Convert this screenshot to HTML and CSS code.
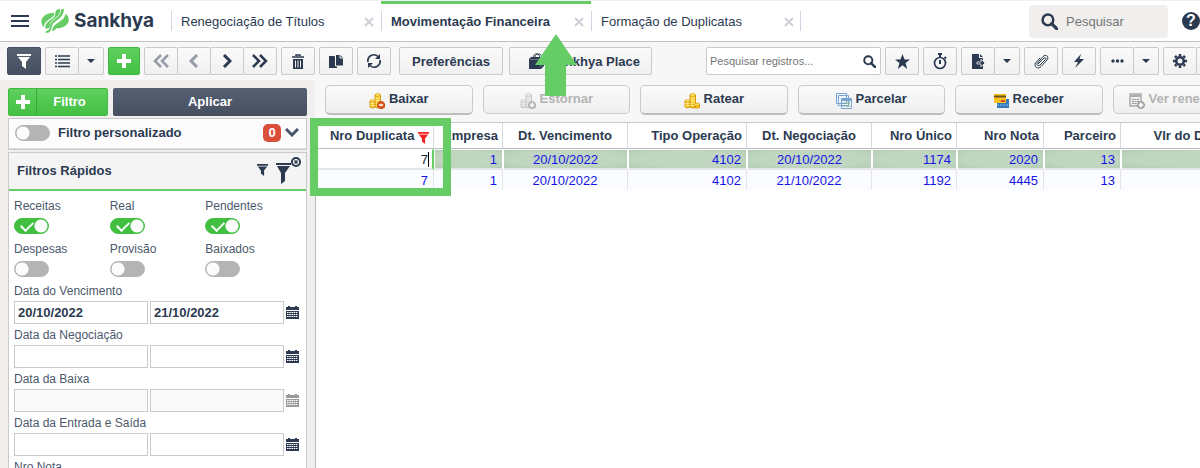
FILE: index.html
```html
<!DOCTYPE html>
<html lang="pt-BR">

<head>
    <meta charset="UTF-8">
    <meta name="viewport" content="width=device-width, initial-scale=1.0">
    <title>Movimentação Financeira</title>
    <link rel="stylesheet" href="styles.css">
</head>

<body>
    <!-- Shared icons -->
    <svg class="sprite" aria-hidden="true">
        <symbol id="i-close" viewBox="0 0 10 10"><path d="M1 1l8 8M9 1L1 9" stroke="currentColor" stroke-width="2" /></symbol>
        <symbol id="i-caret" viewBox="0 0 8 4"><path d="M0 0h8L4 4z" fill="currentColor" /></symbol>
        <symbol id="i-plus" viewBox="0 0 14 14"><path d="M5 0h4v5h5v4H9v5H5V9H0V5h5z" fill="currentColor" /></symbol>
        <symbol id="i-funnel" viewBox="0 0 14 15"><path d="M0 0h14v2H0zM1 3h12L9 8v7l-4-3V8z" fill="currentColor" /></symbol>
        <symbol id="i-search" viewBox="0 0 16 16"><circle cx="6.5" cy="6.5" r="5" fill="none" stroke="currentColor" stroke-width="2.4" /><path d="M10 10l5 5" stroke="currentColor" stroke-width="3" stroke-linecap="round" /></symbol>
        <symbol id="i-calendar" viewBox="0 0 13 13"><path d="M2 0h2v1h5V0h2v1h2v3H0V1h2zM0 5h13v8H0z" fill="currentColor" /><path d="M1 6.5h11M1 8.5h11M1 10.5h11" stroke="#fff" stroke-width="1" stroke-dasharray="1.6 .6" /></symbol>
        <symbol id="i-coins" viewBox="0 0 16 16"><path d="M1 8v6q2.500 2 5 0V8zM6 2v12q3 2 5.500 0V2zM10 11v3.500q2.500 1.500 5.500 0V11z" fill="#fbc92e" stroke="#d9960f" /><path d="M1.500 10.500h4M1.500 12.500h4M6.500 5h4.500M6.500 7.500h4.500M6.500 10h4.500M6.500 12.500h4" stroke="#fff08c" /><ellipse cx="3.500" cy="8" rx="2.500" ry="1.200" fill="#ffe566" stroke="#d9960f" stroke-width=".7" /><ellipse cx="8.700" cy="2" rx="2.700" ry="1.400" fill="#ffe566" stroke="#d9960f" stroke-width=".7" /><ellipse cx="12.700" cy="11.300" rx="2.700" ry="1.200" fill="#ffe566" stroke="#d9960f" stroke-width=".7" /></symbol>
    </svg>

    <header class="topbar">
        <button class="menu-button" aria-label="Menu"><svg width="18" height="12" viewBox="0 0 18 12"><path d="M0 1h18M0 6h18M0 11h18" stroke="currentColor" stroke-width="2" /></svg></button>
        <a class="logo" href="#">
            <svg width="28" height="24" viewBox="0 0 84 72" fill="#66cc66">
                <path d="M9 55C-8 38 2 12 40 11c1 10-6 14-14 19C14 38 9 44 9 55z" />
                <path d="M13 59c-1-13 5-19 16-26 11-7 14-11 14-20C43 4 48 0 57 0c1 14-5 20-15 28-11 8-16 14-16 27-3 3-8 4-13 4z" />
                <path d="M14 72c12 0 16-4 17-14 1-12 8-18 18-25C60 25 68 17 69 0c-6 0-9 1-9 4-1 12-8 19-18 26-10 8-15 14-16 27 0 6-6 9-12 9z" />
                <path d="M74 14c18 14 11 43-28 44-3 5-7 8-12 8-1-12 7-19 17-25 13-8 20-14 23-27z" />
            </svg>
            <span>Sankhya</span>
        </a>
        <nav class="tabs">
            <div class="tab"><a href="#">Renegociação de Títulos</a><button aria-label="Fechar"><svg width="10" height="10"><use href="#i-close" /></svg></button></div>
            <div class="tab tab-active"><a href="#">Movimentação Financeira</a><button aria-label="Fechar"><svg width="10" height="10"><use href="#i-close" /></svg></button>
                <svg class="arrow" width="42" height="62" viewBox="0 0 42 62"><path d="M21 0l21 31H31v31H10V31H0z" fill="#66cc66" /></svg>
            </div>
            <div class="tab"><a href="#">Formação de Duplicatas</a><button aria-label="Fechar"><svg width="10" height="10"><use href="#i-close" /></svg></button></div>
        </nav>
        <label class="global-search">
            <svg width="17" height="17"><use href="#i-search" /></svg>
            <input type="text" placeholder="Pesquisar" aria-label="Pesquisar">
        </label>
        <button class="help" aria-label="Ajuda">?</button>
    </header>

    <div class="toolbar">
        <button class="btn btn-dark" aria-label="Filtro"><svg width="14" height="15"><use href="#i-funnel" /></svg></button>
        <div class="group">
            <button class="btn" aria-label="Lista"><svg width="15" height="13" viewBox="0 0 15 13"><path d="M0 1h2M0 4.500h2M0 8h2M0 11.500h2M3 1h12M3 4.500h12M3 8h12M3 11.500h12" stroke="currentColor" stroke-width="1.500" /></svg></button>
            <button class="btn btn-caret" aria-label="Opções de lista"><svg width="8" height="4"><use href="#i-caret" /></svg></button>
        </div>
        <button class="btn btn-green" aria-label="Adicionar"><svg width="14" height="14"><use href="#i-plus" /></svg></button>
        <div class="group">
            <button class="btn" disabled aria-label="Primeiro"><svg width="16" height="14" viewBox="0 0 16 14"><path d="M8 1L2 7l6 6M15 1L9 7l6 6" fill="none" stroke="currentColor" stroke-width="2.500" /></svg></button>
            <button class="btn" disabled aria-label="Anterior"><svg width="10" height="14" viewBox="0 0 10 14"><path d="M8 1L2 7l6 6" fill="none" stroke="currentColor" stroke-width="3" /></svg></button>
            <button class="btn" aria-label="Próximo"><svg width="10" height="14" viewBox="0 0 10 14"><path d="M2 1l6 6-6 6" fill="none" stroke="currentColor" stroke-width="3" /></svg></button>
            <button class="btn" aria-label="Último"><svg width="16" height="14" viewBox="0 0 16 14"><path d="M1 1l6 6-6 6M8 1l6 6-6 6" fill="none" stroke="currentColor" stroke-width="2.500" /></svg></button>
        </div>
        <button class="btn" aria-label="Excluir"><svg width="12" height="15" viewBox="0 0 12 15"><path d="M4 2V1h4v1M0 3h12" fill="none" stroke="currentColor" stroke-width="1.500" /><path d="M1 5h10v10H1z" fill="currentColor" /><path d="M3.500 6.500v7M6 6.500v7M8.500 6.500v7" stroke="#f4f4f4" /></svg></button>
        <button class="btn" aria-label="Duplicar"><svg width="15" height="14" viewBox="0 0 15 14"><path d="M0 2h5l3 2v10H0z" fill="currentColor" /><path d="M6.500.500h5L14.500 4v8h-8z" fill="currentColor" stroke="#f4f4f4" /><path d="M11 .500V4h3.500" fill="none" stroke="#f4f4f4" /></svg></button>
        <button class="btn" aria-label="Atualizar"><svg width="16" height="16" viewBox="0 0 16 16"><path d="M2 9a6 6 0 0 1 10-5.500M14 7a6 6 0 0 1-10 5.500" fill="none" stroke="currentColor" stroke-width="1.700" /><path d="M14 1v5H9zM2 15v-5h5z" fill="currentColor" /></svg></button>
        <button class="btn btn-text btn-prefs">Preferências</button>
        <button class="btn btn-text btn-place"><svg width="15" height="16" viewBox="0 0 15 16"><path d="M0 6l2-2h13v9l-3 3H0z" fill="currentColor" /><path d="M4 6c0-7 7-7 7 0M6 4c0-4 7-4 7 0" fill="none" stroke="currentColor" /><path d="M1 6.500h11v8" fill="none" stroke="#8791a0" stroke-width=".7" /></svg>Sankhya Place</button>
        <label class="record-search">
            <input type="text" placeholder="Pesquisar registros..." aria-label="Pesquisar registros">
            <svg width="13" height="13"><use href="#i-search" /></svg>
        </label>
        <button class="btn" aria-label="Favoritos"><svg width="15" height="15" viewBox="0 0 16 16"><path d="M8 0l2.200 5.800H16l-4.700 3.700L13 16l-5-4-5 4 1.700-6.500L0 5.800h5.800z" fill="currentColor" /></svg></button>
        <button class="btn" aria-label="Cronômetro"><svg width="14" height="17" viewBox="0 0 14 17"><circle cx="7" cy="10" r="5.500" fill="none" stroke="currentColor" stroke-width="1.700" /><path d="M5 1h4M7 1v3M7 7v4M11.500 4l1.500 1.500" stroke="currentColor" stroke-width="2" /></svg></button>
        <div class="group">
            <button class="btn" aria-label="Exportar"><svg width="14" height="15" viewBox="0 0 14 15"><path d="M1 0h7v4h4v11H1z" fill="currentColor" /><path d="M9 0l3 3H9z" fill="currentColor" /><path d="M6 8h4V5l4 4-4 4v-3H6z" fill="currentColor" stroke="#f4f4f4" stroke-width=".8" /></svg></button>
            <button class="btn btn-caret" aria-label="Opções de exportação"><svg width="8" height="4"><use href="#i-caret" /></svg></button>
        </div>
        <button class="btn" aria-label="Anexos"><svg width="15" height="15" viewBox="0 0 15 15"><path d="M4 10l6-6c1.500-1 2.500.500 1.500 1.500L6 11c-2 1.500-4 0-2.500-2L9 2.500c3-3 6.500.500 4 3.500l-6 6.500c-3 3-7.500.500-5.500-3.500L6 4" fill="none" stroke="currentColor" /></svg></button>
        <button class="btn" aria-label="Ações"><svg width="10" height="14" viewBox="0 0 10 14"><path d="M7 0L0 8h4l-3 6 9-9H5.500z" fill="currentColor" /></svg></button>
        <div class="group">
            <button class="btn" aria-label="Mais"><svg width="13" height="4" viewBox="0 0 13 4"><circle cx="2" cy="2" r="1.700" fill="currentColor" /><circle cx="6.500" cy="2" r="1.700" fill="currentColor" /><circle cx="11" cy="2" r="1.700" fill="currentColor" /></svg></button>
            <button class="btn btn-caret" aria-label="Mais opções"><svg width="8" height="4"><use href="#i-caret" /></svg></button>
        </div>
        <div class="group">
            <button class="btn" aria-label="Configurações"><svg width="14" height="14" viewBox="0 0 14 14"><circle cx="7" cy="7" r="3.800" fill="none" stroke="currentColor" stroke-width="2.600" /><path d="M7 0v2M7 12v2M0 7h2M12 7h2M2 2l1.500 1.500M10.500 10.500L12 12M12 2l-1.500 1.500M3.500 10.500L2 12" stroke="currentColor" stroke-width="2.600" /></svg></button>
            <button class="btn btn-caret" aria-label="Opções de configuração"></button>
        </div>
    </div>

    <div class="workspace">
        <aside class="sidebar">
            <div class="filter-buttons">
                <button class="filter-add"><span class="filter-plus"><svg width="14" height="14"><use href="#i-plus" /></svg></span><span class="filter-label">Filtro</span></button>
                <button class="filter-apply">Aplicar</button>
            </div>
            <div class="custom-filter">
                <label><input class="toggle" type="checkbox">Filtro personalizado</label>
                <span class="count">0</span>
                <svg width="14" height="9" viewBox="0 0 14 9"><path d="M1 1l6 6 6-6" fill="none" stroke="#49556a" stroke-width="3" /></svg>
            </div>
            <section class="quick-filters">
                <div class="quick-head">
                    <h2>Filtros Rápidos</h2>
                    <svg width="11" height="12"><use href="#i-funnel" /></svg>
                    <svg width="27" height="27" viewBox="0 0 27 27"><path d="M1 6h15v2H1zM2 9h13l-5 7v8l-4 3V16z" fill="currentColor" /><circle cx="21" cy="5" r="4" fill="#fff" stroke="currentColor" stroke-width="2" /><path d="M19.500 3.500l3 3M22.500 3.500l-3 3" stroke="currentColor" stroke-width="1.500" /></svg>
                </div>
                <div class="quick-body">
                    <div class="toggles">
                        <label>Receitas<input class="toggle" type="checkbox" checked></label>
                        <label>Real<input class="toggle" type="checkbox" checked></label>
                        <label>Pendentes<input class="toggle" type="checkbox" checked></label>
                        <label>Despesas<input class="toggle" type="checkbox"></label>
                        <label>Provisão<input class="toggle" type="checkbox"></label>
                        <label>Baixados<input class="toggle" type="checkbox"></label>
                    </div>
                    <div class="period">
                        <label for="vencimento">Data do Vencimento</label>
                        <input id="vencimento" type="text" value="20/10/2022">
                        <input type="text" value="21/10/2022" aria-label="Data do Vencimento final">
                        <button aria-label="Calendário"><svg width="13" height="13"><use href="#i-calendar" /></svg></button>
                    </div>
                    <div class="period">
                        <label for="negociacao">Data da Negociação</label>
                        <input id="negociacao" type="text">
                        <input type="text" aria-label="Data da Negociação final">
                        <button aria-label="Calendário"><svg width="13" height="13"><use href="#i-calendar" /></svg></button>
                    </div>
                    <div class="period">
                        <label for="baixa">Data da Baixa</label>
                        <input id="baixa" type="text" disabled>
                        <input type="text" aria-label="Data da Baixa final" disabled>
                        <button aria-label="Calendário" disabled><svg width="13" height="13"><use href="#i-calendar" /></svg></button>
                    </div>
                    <div class="period">
                        <label for="entrada">Data da Entrada e Saída</label>
                        <input id="entrada" type="text">
                        <input type="text" aria-label="Data da Entrada e Saída final">
                        <button aria-label="Calendário"><svg width="13" height="13"><use href="#i-calendar" /></svg></button>
                    </div>
                    <div class="period">
                        <label for="nota">Nro Nota</label>
                        <input id="nota" type="text">
                    </div>
                </div>
            </section>
        </aside>

        <main class="content">
            <div class="actions">
                <button class="action"><svg width="16" height="16"><use href="#i-coins" /><circle cx="12" cy="12" r="3.500" fill="#e8622a" stroke="#b8400f" /><path d="M10 12h4" stroke="#fff" stroke-width="1.500" /></svg>Baixar</button>
                <button class="action" disabled><svg class="gray" width="16" height="16"><use href="#i-coins" /><circle cx="12" cy="12" r="3.500" fill="#999" stroke="#666" /><path d="M10 12h4M12 10v4" stroke="#fff" stroke-width="1.500" /></svg>Estornar</button>
                <button class="action"><svg width="16" height="16"><use href="#i-coins" /></svg>Ratear</button>
                <button class="action"><svg width="16" height="16" viewBox="0 0 16 16" fill="#eef5fc" stroke="#7ba3cf"><path d="M.500.500h10v10H.500zM2.500 2.500h10v10h-10zM5.500 5.500h10v10h-10z" /><path d="M6 7h9" stroke-width="2" /><path d="M7 10h2M10 10h4M7 13h2M10 13h4" stroke="#6fa97b" /></svg>Parcelar</button>
                <button class="action"><svg width="15" height="14" viewBox="0 0 15 14"><path d="M3 5h12v9H3z" fill="#3579c0" /><path d="M3 11h12" stroke="#8ab8e6" stroke-dasharray="2 1" /><path d="M0 0h12v9H0z" fill="#fbc21c" /><path d="M0 2.500h12" stroke="#6b5320" stroke-width="2" /><path d="M7 6h4v2H7z" fill="#d9482b" /></svg>Receber</button>
                <button class="action action-long" disabled><svg width="16" height="16" viewBox="0 0 16 16"><path d="M1 1h11v12H1z" fill="#eee" stroke="#aaa" stroke-width="1.500" /><path d="M2 3h9" stroke="#aaa" stroke-width="2" /><path d="M3 6.500h7M3 8.500h7M3 10.500h7" stroke="#999" stroke-dasharray="2 .5" /><circle cx="12" cy="12" r="3.500" fill="#bbb" stroke="#999" /><path d="M10 12h4M12 10v4" stroke="#fff" stroke-width="1.500" /></svg>Ver renegociação</button>
            </div>
            <div class="grid-wrap">
                <table class="grid">
                    <thead>
                        <tr>
                            <th class="col-duplicata">Nro Duplicata <svg class="filtered" width="11" height="12"><use href="#i-funnel" /></svg></th>
                            <th class="col-empresa">Empresa</th>
                            <th class="col-data center">Dt. Vencimento</th>
                            <th class="col-tipo">Tipo Operação</th>
                            <th class="col-data center">Dt. Negociação</th>
                            <th class="col-unico">Nro Único</th>
                            <th class="col-nota">Nro Nota</th>
                            <th class="col-parceiro">Parceiro</th>
                            <th class="col-valor">Vlr do Desdobramento</th>
                        </tr>
                    </thead>
                    <tbody>
                        <tr class="selected">
                            <td class="editing"><input type="text" value="7" aria-label="Nro Duplicata"></td>
                            <td>1</td>
                            <td class="center">20/10/2022</td>
                            <td>4102</td>
                            <td class="center">20/10/2022</td>
                            <td>1174</td>
                            <td>2020</td>
                            <td>13</td>
                            <td></td>
                        </tr>
                        <tr>
                            <td>7</td>
                            <td>1</td>
                            <td class="center">20/10/2022</td>
                            <td>4102</td>
                            <td class="center">21/10/2022</td>
                            <td>1192</td>
                            <td>4445</td>
                            <td>13</td>
                            <td></td>
                        </tr>
                    </tbody>
                </table>
                <div class="highlight"></div>
            </div>
        </main>
    </div>
</body>

</html>
```

FILE: styles.css
```css
* {
    box-sizing: border-box;
}

body {
    margin: 0;
    height: 100vh;
    display: flex;
    flex-direction: column;
    overflow: hidden;
    background-color: #f7f7f7;
    color: #2b3a50;
    font-family: "Liberation Sans", Arial, sans-serif;
    font-size: 13px;
}

button,
input {
    font: inherit;
    color: inherit;
}

button {
    padding: 0;
    border: none;
    background: none;
    cursor: pointer;
}

a {
    color: inherit;
    text-decoration: none;
}

svg {
    display: block;
    flex: none;
}

.sprite {
    position: absolute;
    width: 0;
    height: 0;
}

/* Top bar */
.topbar {
    display: flex;
    align-items: center;
    flex: none;
    height: 42px;
    padding-left: 11px;
    background-color: #fff;
    border-top: 1px solid #f0f0f0;
    border-bottom: 1px solid #c2c2c2;
}

.logo {
    display: flex;
    align-items: center;
    gap: 5px;
    width: 130px;
    margin-left: 12px;
    font-family: Inter, sans-serif;
    font-size: 19px;
    font-weight: bold;
    line-height: 20px;
}

.tabs {
    display: flex;
    align-self: stretch;
    flex: 1;
}

.tab {
    position: relative;
    display: flex;
    align-items: center;
    justify-content: space-between;
    width: 210px;
    padding: 0 7px 2px 10px;
    border-top: 3px solid transparent;
}

.tab::before,
.tab:last-child::after {
    content: "";
    position: absolute;
    left: 0;
    top: 7px;
    height: 20px;
    border-left: 1px solid #cdd6e2;
}

.tab:last-child::after {
    left: auto;
    right: 0;
}

.tab button {
    color: #cdd0d6;
}

.tab-active {
    border-top-color: #66cc66;
    font-weight: bold;
}

.arrow {
    position: absolute;
    z-index: 2;
    left: 154px;
    top: 30px;
}

.global-search {
    display: flex;
    align-items: center;
    flex: none;
    gap: 8px;
    width: 139px;
    height: 33px;
    padding: 0 12px;
    border-radius: 4px;
    background-color: #f0efed;
}

.global-search input,
.record-search input {
    flex: 1;
    min-width: 0;
    padding: 0;
    border: none;
    outline: none;
    background: none;
}

::placeholder {
    color: #757575;
    opacity: 1;
}

.help {
    flex: none;
    width: 18px;
    height: 18px;
    margin-left: 14px;
    border-radius: 50%;
    background-color: #2b3a50;
    color: #fff;
    font-size: 16px;
    font-weight: bold;
    line-height: 18px;
}

/* Toolbar */
.toolbar {
    display: flex;
    flex: none;
    gap: 4px;
    padding: 5px 0 5px 7px;
}

.btn {
    display: flex;
    align-items: center;
    justify-content: center;
    flex: none;
    width: 34px;
    height: 28px;
    border: 1px solid #cacaca;
    border-radius: 2px;
    background-image: linear-gradient(#fafafa, #f0f0f0);
}

.btn:disabled {
    color: #959ca7;
}

.btn-dark {
    border-color: #434e60;
    background-image: linear-gradient(#556072, #454f60);
    color: #fff;
}

.btn-green {
    width: 32px;
    border-color: #3fbb3f;
    background-image: linear-gradient(#5fd05f, #43c043);
    color: #fff;
}

.group {
    display: flex;
    flex: none;
}

.group .btn + .btn {
    margin-left: -1px;
}

.btn-caret {
    width: 26px;
}

.btn-text {
    gap: 5px;
    font-weight: bold;
}

.btn-prefs {
    width: 104px;
    margin-left: 4px;
}

.btn-place {
    width: 143px;
    margin-left: 2px;
    padding-left: 8px;
}

.record-search {
    display: flex;
    align-items: center;
    flex: none;
    width: 175px;
    height: 28px;
    margin-left: 50px;
    padding: 0 4px 0 3px;
    border: 1px solid #cacaca;
    border-radius: 2px;
    background-color: #fff;
    font-size: 11px;
}

/* Sidebar */
.workspace {
    display: flex;
    flex: 1;
    min-height: 0;
}

.sidebar {
    flex: none;
    width: 315px;
    padding: 8px 8px 0;
    background-color: #f0efed;
}

.filter-buttons {
    display: flex;
    gap: 5px;
    margin-bottom: 2px;
}

.filter-add,
.filter-apply {
    display: flex;
    align-items: center;
    height: 28px;
    padding-bottom: 2px;
    border-radius: 2px;
    color: #fff;
    font-weight: bold;
}

.filter-add {
    width: 100px;
    padding-bottom: 0;
    border: 1px solid #3fbb3f;
    background-image: linear-gradient(#5fd05f, #43c043);
}

.filter-plus {
    display: flex;
    align-items: center;
    height: 26px;
    padding: 0 6px 0 7px;
    border-right: 1px solid #36ab36;
}

.filter-label {
    flex: 1;
    padding: 0 5px 2px 0;
}

.filter-apply {
    flex: 1;
    justify-content: center;
    background-image: linear-gradient(#556072, #454f60);
}

.custom-filter {
    display: flex;
    align-items: center;
    gap: 4px;
    height: 32px;
    margin-bottom: 2px;
    padding: 0 7px 3px 6px;
    border: 1px solid #cacaca;
    background-color: #fcfcfc;
    box-shadow: inset 0 -1px #ddd;
    font-weight: bold;
}

.custom-filter label {
    display: flex;
    align-items: center;
    flex: 1;
    gap: 8px;
}

.count {
    width: 18px;
    border-radius: 5px;
    background-color: #d94f3a;
    color: #fff;
    line-height: 18px;
    text-align: center;
}

.toggle {
    appearance: none;
    display: block;
    width: 35px;
    height: 16px;
    margin: 0;
    border: 1px solid #b4b4b4;
    border-radius: 8px;
    background: radial-gradient(circle at 7px 7px, #fcfcfc 6px, #b4b4b4 7px);
}

.toggle:checked {
    position: relative;
    border-color: #40bf40;
    background: radial-gradient(circle at 26px 7px, #fcfcfc 6px, #40bf40 7px);
}

.toggle:checked::after {
    content: "";
    position: absolute;
    left: 6px;
    top: 2px;
    width: 10px;
    height: 6px;
    border: solid #fff;
    border-width: 0 0 2px 2px;
    transform: rotate(-45deg);
}

.quick-filters {
    border: 1px solid #cacaca;
    background-color: #fff;
}

.quick-head {
    display: flex;
    align-items: center;
    gap: 7px;
    height: 38px;
    padding: 0 4px 2px 8px;
    border-bottom: 2px solid #66cc66;
    background-color: #f4f4f4;
}

.quick-head h2 {
    flex: 1;
    margin: 0;
    font-size: 13px;
}

.quick-body {
    padding: 7px 5px 0;
    color: #4b586c;
    font-size: 12px;
}

.toggles {
    display: grid;
    grid-template-columns: repeat(3, 1fr);
    row-gap: 7px;
    margin-bottom: 4px;
}

.toggles .toggle {
    margin-top: 4px;
}

.toggles label {
    line-height: 16px;
}

.period {
    display: grid;
    grid-template-columns: 1fr 1fr 15px;
    column-gap: 2px;
    margin-bottom: 1px;
}

.period label {
    grid-column: 1 / -1;
    line-height: 20px;
}

.period input {
    min-width: 0;
    height: 23px;
    padding: 0 3px;
    border: 1px solid #cacaca;
    background-color: #fff;
    color: #2b3a50;
    font-size: 13px;
    font-weight: bold;
}

.period input:disabled {
    background-color: #fafafa;
}

.period button {
    color: #2b3a50;
}

.period button:disabled {
    color: #9a9a9a;
}

/* Content */
.content {
    display: flex;
    flex-direction: column;
    flex: 1;
    min-width: 0;
}

.actions {
    display: grid;
    grid-template-columns: repeat(6, calc(18% - 10px));
    column-gap: 10px;
    margin-left: 10px;
    padding: 5px 0 7px;
}

.action {
    display: flex;
    align-items: center;
    justify-content: center;
    gap: 4px;
    height: 30px;
    padding-bottom: 2px;
    border: 1px solid #cacaca;
    border-bottom: 2px solid #bdbdbd;
    border-radius: 5px;
    background-image: linear-gradient(#fafafa, #efefef);
    font-weight: bold;
    white-space: nowrap;
}

.action svg {
    margin-top: 4px;
}

.action:disabled {
    height: 29px;
    border-bottom: 1px solid #cacaca;
    color: #b3b3b3;
}

.action-long {
    justify-content: flex-start;
    padding-left: 15px;
}

.gray {
    filter: grayscale(1);
    opacity: 0.5;
}

.grid-wrap {
    position: relative;
    flex: 1;
    border-top: 1px solid #c8c8c8;
    border-left: 1px solid #bbb;
    background-color: #fff;
}

.grid {
    width: 982px;
    table-layout: fixed;
    border-spacing: 0;
}

.grid th {
    height: 26px;
    padding: 0 4px;
    border-right: 1px solid #d8dbe0;
    border-bottom: 1px solid #b9bdc4;
    text-align: right;
    white-space: nowrap;
}

.grid td {
    height: 20px;
    padding: 0 5px;
    border-right: 1px solid #e2e4e8;
    background-color: #fbfcff;
    color: #1414e6;
    text-align: right;
}

.grid .center {
    text-align: center;
}

.grid .selected td {
    height: 21px;
    border: 1px solid #fff;
    border-bottom: 2px solid #e4e6ea;
    background: radial-gradient(#c1d6c1 60%, #b3ccb3);
}

.col-duplicata {
    width: 118px;
}

.col-empresa {
    width: 69px;
}

.col-data {
    width: 125px;
}

.col-tipo {
    width: 119px;
}

.col-unico {
    width: 85px;
}

.col-nota {
    width: 87px;
}

.col-parceiro {
    width: 77px;
}

.filtered {
    display: inline-block;
    vertical-align: -4px;
    color: #f22222;
}

.grid .selected .editing {
    position: relative;
    padding: 0;
    border-right: 2px solid #66cc66;
    background: #fff;
}

.editing input {
    display: block;
    width: 100%;
    padding: 0 4px;
    border: none;
    outline: none;
    color: #1c2636;
    text-align: right;
}

/* Text cursor */
.editing::after {
    content: "";
    position: absolute;
    right: 3px;
    top: 2px;
    height: 15px;
    border-left: 1px solid #000;
}

.highlight {
    position: absolute;
    left: -6px;
    top: -5px;
    width: 141px;
    height: 78px;
    border: 8px solid #66cc66;
}
```
